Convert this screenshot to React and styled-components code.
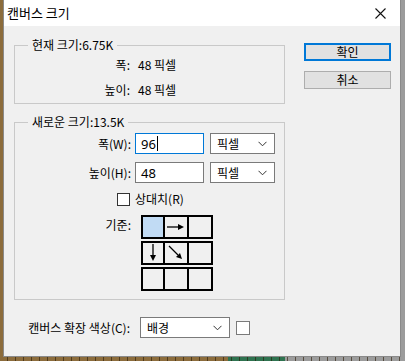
import React from "react";
import styled, { createGlobalStyle } from "styled-components";

const Global = createGlobalStyle`
  html, body { margin: 0; padding: 0; }
  body {
    width: 405px; height: 361px; overflow: hidden;
    background:
      repeating-linear-gradient(to right, transparent 0 7px, rgba(40,25,5,0.6) 7px 8px),
      linear-gradient(to right, #8c6c3c 0 228px, #2f7350 228px 285px, #9c9c9c 285px);
    font-family: "Noto Sans CJK KR", "Noto Sans", sans-serif;
    font-size: 12px;
    color: #000;
  }
`;

const Window = styled.div`
  margin-left: 3px;
  width: 398px;
  height: 357px;
  box-sizing: border-box;
  border: 1px solid #8a8a8a;
  border-top: none;
  background: #f0f0f0;
  display: flex;
  flex-direction: column;
`;

const TitleBar = styled.div`
  height: 26px;
  background: #fff;
  display: flex;
  align-items: center;
  justify-content: space-between;
  padding: 0 14px 0 3px;
  flex-shrink: 0;
`;

const Title = styled.span`
  font-size: 13px;
  line-height: 16px;
`;

const Body = styled.div`
  display: flex;
  padding: 11px 0 0 10px;
  gap: 19px;
`;

const LeftCol = styled.div`
  width: 271px;
  display: flex;
  flex-direction: column;
`;

const Group = styled.fieldset`
  margin: 0 0 ${(p) => p.$mb || 0}px 0;
  padding: ${(p) => p.$pt}px 0 ${(p) => p.$pb}px 0;
  border: 1px solid #c9c9c9;
  min-width: 0;
  display: flex;
  flex-direction: column;
  gap: ${(p) => p.$gap}px;
`;

const Legend = styled.legend`
  margin-left: 13px;
  padding: 0 4px;
  line-height: 16px;
  height: 16px;
`;

const InfoRow = styled.div`
  display: grid;
  grid-template-columns: 115px auto;
  column-gap: 8px;
  height: 20px;
  align-items: center;
  line-height: 16px;
`;

const Label = styled.span`
  text-align: right;
  white-space: nowrap;
`;

const FieldRow = styled.div`
  display: flex;
  align-items: center;
  height: ${(p) => p.$h || 21}px;
  padding-left: ${(p) => p.$pl || 0}px;
  line-height: 16px;
`;

const FieldLabel = styled.span`
  width: 116px;
  text-align: right;
  white-space: nowrap;
  margin-right: 4px;
  align-self: ${(p) => (p.$top ? "flex-start" : "center")};
  margin-top: ${(p) => (p.$top ? 2 : 0)}px;
`;

const Input = styled.div`
  width: 69px;
  height: 21px;
  box-sizing: border-box;
  border: 1px solid ${(p) => (p.$focus ? "#0078d7" : "#7a7a7a")};
  background: #fff;
  display: flex;
  align-items: center;
  padding-left: 5px;
  font-family: "Noto Sans", sans-serif;
  font-size: 13px;
`;

const Caret = styled.span`
  display: inline-block;
  width: 1px;
  height: 15px;
  background: #000;
  margin-left: 1px;
`;

const Select = styled.div`
  width: ${(p) => p.$w}px;
  height: 21px;
  box-sizing: border-box;
  border: 1px solid #7a7a7a;
  background: #fff;
  margin-left: ${(p) => p.$ml || 6}px;
  display: flex;
  align-items: center;
  justify-content: space-between;
  padding: 0 7px 0 6px;
`;

const Check = styled.span`
  width: 13px;
  height: 13px;
  box-sizing: border-box;
  border: 1px solid #333;
  background: #fff;
  margin-right: 5px;
`;

const Anchor = styled.div`
  display: grid;
  grid-template-columns: 24px 24px 24px;
  grid-auto-rows: 24px;
  row-gap: 2px;
  margin-left: 0;
`;

const Cell = styled.div`
  box-sizing: border-box;
  border: 2px solid #000;
  border-left-width: ${(p) => (p.$first ? 2 : 0)}px;
  background: ${(p) => (p.$sel ? "#c1dbf4" : "#f0f0f0")};
  display: flex;
  align-items: center;
  justify-content: center;
`;

const BottomRow = styled.div`
  display: flex;
  align-items: center;
  height: 21px;
  margin-top: 17px;
  line-height: 16px;
`;

const Swatch = styled.span`
  width: 14px;
  height: 14px;
  box-sizing: border-box;
  border: 1px solid #7a7a7a;
  background: #fff;
  margin-left: 6px;
`;

const RightCol = styled.div`
  display: flex;
  flex-direction: column;
  gap: 10px;
  padding-top: 6px;
`;

const Button = styled.div`
  width: 87px;
  height: 18px;
  box-sizing: border-box;
  background: #e1e1e1;
  border: ${(p) => (p.$def ? "2px solid #0078d7" : "1px solid #adadad")};
  display: flex;
  align-items: center;
  justify-content: center;
  line-height: 14px;
`;

const Chevron = () => (
  <svg width="9" height="6" viewBox="0 0 9 6">
    <path d="M0.5 0.8 L4.5 4.8 L8.5 0.8" fill="none" stroke="#333" strokeWidth="1" />
  </svg>
);

const CloseIcon = () => (
  <svg width="11" height="11" viewBox="0 0 11 11">
    <path d="M0.5 0.5 L10.5 10.5 M10.5 0.5 L0.5 10.5" stroke="#111" strokeWidth="1.1" />
  </svg>
);

const Arrow = ({ dir }) => {
  if (dir === "right")
    return (
      <svg width="20" height="10" viewBox="0 0 20 10">
        <path d="M1 5 L13 5" stroke="#000" strokeWidth="1.3" />
        <path d="M12 2 L18 5 L12 8 Z" fill="#000" />
      </svg>
    );
  if (dir === "down")
    return (
      <svg width="10" height="20" viewBox="0 0 10 20">
        <path d="M5 1 L5 13" stroke="#000" strokeWidth="1.3" />
        <path d="M2 12 L5 18 L8 12 Z" fill="#000" />
      </svg>
    );
  return (
    <svg width="18" height="18" viewBox="0 0 18 18">
      <path d="M2 2 L11 11" stroke="#000" strokeWidth="1.3" />
      <path d="M9 13 L15 15 L13 9 Z" fill="#000" />
    </svg>
  );
};

const cells = [
  { sel: true }, { arrow: "right" }, {},
  { arrow: "down" }, { arrow: "diag" }, {},
  {}, {}, {},
];

export default function App() {
  return (
    <>
      <Global />
      <Window>
        <TitleBar>
          <Title>캔버스 크기</Title>
          <CloseIcon />
        </TitleBar>
        <Body>
          <LeftCol>
            <Group $pt={2} $pb={3} $gap={5} $mb={10}>
              <Legend>현재 크기:6.75K</Legend>
              <InfoRow>
                <Label>폭:</Label>
                <span>48 픽셀</span>
              </InfoRow>
              <InfoRow>
                <Label>높이:</Label>
                <span>48 픽셀</span>
              </InfoRow>
            </Group>
            <Group $pt={3} $pb={8} $gap={8}>
              <Legend>새로운 크기:13.5K</Legend>
              <FieldRow>
                <FieldLabel>폭(W):</FieldLabel>
                <Input $focus>
                  96<Caret />
                </Input>
                <Select $w={65}>
                  <span>픽셀</span>
                  <Chevron />
                </Select>
              </FieldRow>
              <FieldRow>
                <FieldLabel>높이(H):</FieldLabel>
                <Input>48</Input>
                <Select $w={65}>
                  <span>픽셀</span>
                  <Chevron />
                </Select>
              </FieldRow>
              <FieldRow $h={16} $pl={102}>
                <Check />
                <span>상대치(R)</span>
              </FieldRow>
              <FieldRow $h={76}>
                <FieldLabel $top style={{ marginRight: 10 }}>기준:</FieldLabel>
                <Anchor>
                  {cells.map((c, i) => (
                    <Cell key={i} $first={i % 3 === 0} $sel={c.sel}>
                      {c.arrow && <Arrow dir={c.arrow} />}
                    </Cell>
                  ))}
                </Anchor>
              </FieldRow>
            </Group>
            <BottomRow>
              <FieldLabel>캔버스 확장 색상(C):</FieldLabel>
              <Select $w={90} $ml={0}>
                <span>배경</span>
                <Chevron />
              </Select>
              <Swatch />
            </BottomRow>
          </LeftCol>
          <RightCol>
            <Button $def>확인</Button>
            <Button>취소</Button>
          </RightCol>
        </Body>
      </Window>
    </>
  );
}
